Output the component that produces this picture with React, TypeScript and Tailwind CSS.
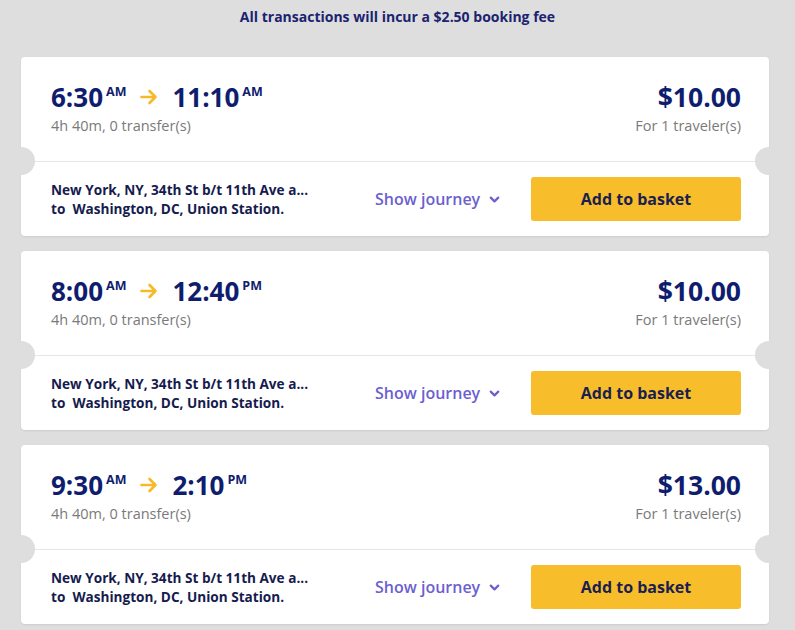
import { ChevronDown } from "lucide-react";

type Trip = {
  dep: string;
  depMer: string;
  arr: string;
  arrMer: string;
  price: string;
};

const trips: Trip[] = [
  { dep: "6:30", depMer: "AM", arr: "11:10", arrMer: "AM", price: "$10.00" },
  { dep: "8:00", depMer: "AM", arr: "12:40", arrMer: "PM", price: "$10.00" },
  { dep: "9:30", depMer: "AM", arr: "2:10", arrMer: "PM", price: "$13.00" },
];

function Arrow() {
  return (
    <svg width="18" height="16" viewBox="0 0 18 16" fill="none" className="mx-[14px]">
      <path
        d="M1.5 8h14M9.5 2l6 6-6 6"
        stroke="#f7b928"
        strokeWidth="2.6"
        strokeLinecap="round"
        strokeLinejoin="round"
      />
    </svg>
  );
}

function TripCard({ trip }: { trip: Trip }) {
  return (
    <div className="relative w-[748px] rounded-[4px] bg-white shadow-[0_1px_2px_rgba(0,0,0,0.08)]">
      <div className="flex justify-between pl-[30px] pr-[28px] pt-[23px] h-[104px]">
        <div>
          <div className="flex items-center text-[#0f1d6e]">
            <span className="text-[26px] font-bold leading-[34px]">{trip.dep}</span>
            <span className="self-start mt-[3px] ml-[3px] text-[12.5px] font-bold">{trip.depMer}</span>
            <Arrow />
            <span className="text-[26px] font-bold leading-[34px]">{trip.arr}</span>
            <span className="self-start mt-[3px] ml-[3px] text-[12.5px] font-bold">{trip.arrMer}</span>
          </div>
          <div className="mt-[1px] text-[14.5px] text-[#7a7a7a]">4h 40m, 0 transfer(s)</div>
        </div>
        <div className="text-right">
          <div className="text-[26.5px] font-bold leading-[34px] text-[#0f1d6e]">{trip.price}</div>
          <div className="mt-[1px] text-[14.5px] text-[#7a7a7a]">For 1 traveler(s)</div>
        </div>
      </div>
      <div className="border-t border-[#e6e6e6] flex items-center pl-[30px] pr-[28px] h-[75px]">
        <div className="w-[324px] text-[13.6px] font-bold leading-[19px] text-[#161b4e]">
          <div>New York, NY, 34th St b/t 11th Ave a...</div>
          <div>to&nbsp; Washington, DC, Union Station.</div>
        </div>
        <button className="flex items-center gap-[7px] text-[16px] font-semibold text-[#6c5fd0]">
          Show journey
          <ChevronDown size={15} strokeWidth={3.5} />
        </button>
        <button className="ml-auto w-[210px] h-[44px] rounded-[3px] bg-[#f8bd2b] text-[16px] font-bold text-[#1a1f4f]">
          Add to basket
        </button>
      </div>
      <div className="absolute left-[-14px] top-[90px] w-[28px] h-[28px] rounded-full bg-[#dedede]" />
      <div className="absolute right-[-14px] top-[90px] w-[28px] h-[28px] rounded-full bg-[#dedede]" />
    </div>
  );
}

export default function App() {
  return (
    <div
      className="min-h-screen bg-[#dedede] overflow-hidden"
      style={{ fontFamily: "'Open Sans', 'Noto Sans', sans-serif" }}
    >
      <p className="pt-[6px] text-center text-[14px] font-bold text-[#1b2370]">
        All transactions will incur a $2.50 booking fee
      </p>
      <div className="mt-[30px] ml-[21px] flex flex-col gap-[15px]">
        {trips.map((t, i) => (
          <TripCard key={i} trip={t} />
        ))}
      </div>
    </div>
  );
}
